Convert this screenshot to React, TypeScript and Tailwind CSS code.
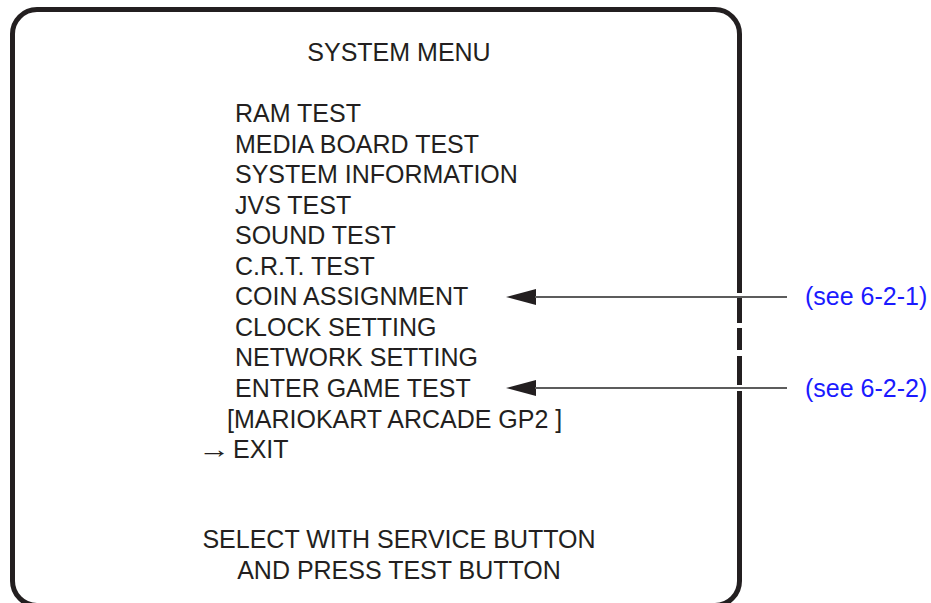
import React from 'react';

const items = [
  'RAM TEST',
  'MEDIA BOARD TEST',
  'SYSTEM INFORMATION',
  'JVS TEST',
  'SOUND TEST',
  'C.R.T. TEST',
];

// pointer arrow running from a menu line out to the reference label
const Pointer: React.FC<{ label: string }> = ({ label }) => (
  <div className="flex items-center">
    <svg width="281" height="16" viewBox="0 0 281 16" className="relative z-10 block">
      <polygon points="0,8 30,0 30,16" fill="#231f20" />
      <line x1="29" y1="8" x2="281" y2="8" stroke="#5c5c5c" strokeWidth="2" />
    </svg>
    <span className="ml-[18px] text-[#1a1aff] whitespace-nowrap">{label}</span>
  </div>
);

const Row: React.FC<{ text: string; label?: string }> = ({ text, label }) => (
  <div className="flex items-center pl-[46px] whitespace-nowrap">
    <span className={label ? 'w-[271px] shrink-0' : ''}>{text}</span>
    {label && <Pointer label={label} />}
  </div>
);

export default function App() {
  return (
    <div className="w-[931px] h-[603px] overflow-hidden bg-white text-[#231f20] font-['Liberation_Sans',Arial,sans-serif] text-[25px] leading-[30.55px]">
      <div className="relative ml-[10px] mt-[7px] w-[732px] h-[601px] rounded-[27px] border-[5px] border-[#231f20]">
        {/* breaks in the right edge where the pointers cross it */}
        <div className="absolute -right-[6px] top-[281px] h-[5px] w-[7px] bg-white" />
        <div className="absolute -right-[6px] top-[311px] h-[5px] w-[7px] bg-white" />
        <div className="absolute -right-[6px] top-[338px] h-[6px] w-[7px] bg-white" />
        <div className="absolute -right-[6px] top-[373px] h-[6px] w-[7px] bg-white" />

        <div className="ml-[174px] w-[420px] pt-[25px]">
          <div className="text-center">SYSTEM MENU</div>

          <div className="mt-[30.5px]">
            {items.map((t) => (
              <Row key={t} text={t} />
            ))}
            <Row text="COIN ASSIGNMENT" label="(see 6-2-1)" />
            <Row text="CLOCK SETTING" />
            <Row text="NETWORK SETTING" />
            <Row text="ENTER GAME TEST" label="(see 6-2-2)" />
            <div className="pl-[38px] whitespace-nowrap">[MARIOKART ARCADE GP2 ]</div>
            <div className="flex pl-[9px]">
              <span className="w-[35px] shrink-0">
                <span className="inline-block origin-left scale-x-[1.3]">→</span>
              </span>
              <span>EXIT</span>
            </div>
          </div>

          <div className="mt-[59.5px] text-center whitespace-nowrap">
            <div>SELECT WITH SERVICE BUTTON</div>
            <div>AND PRESS TEST BUTTON</div>
          </div>
        </div>
      </div>
    </div>
  );
}
